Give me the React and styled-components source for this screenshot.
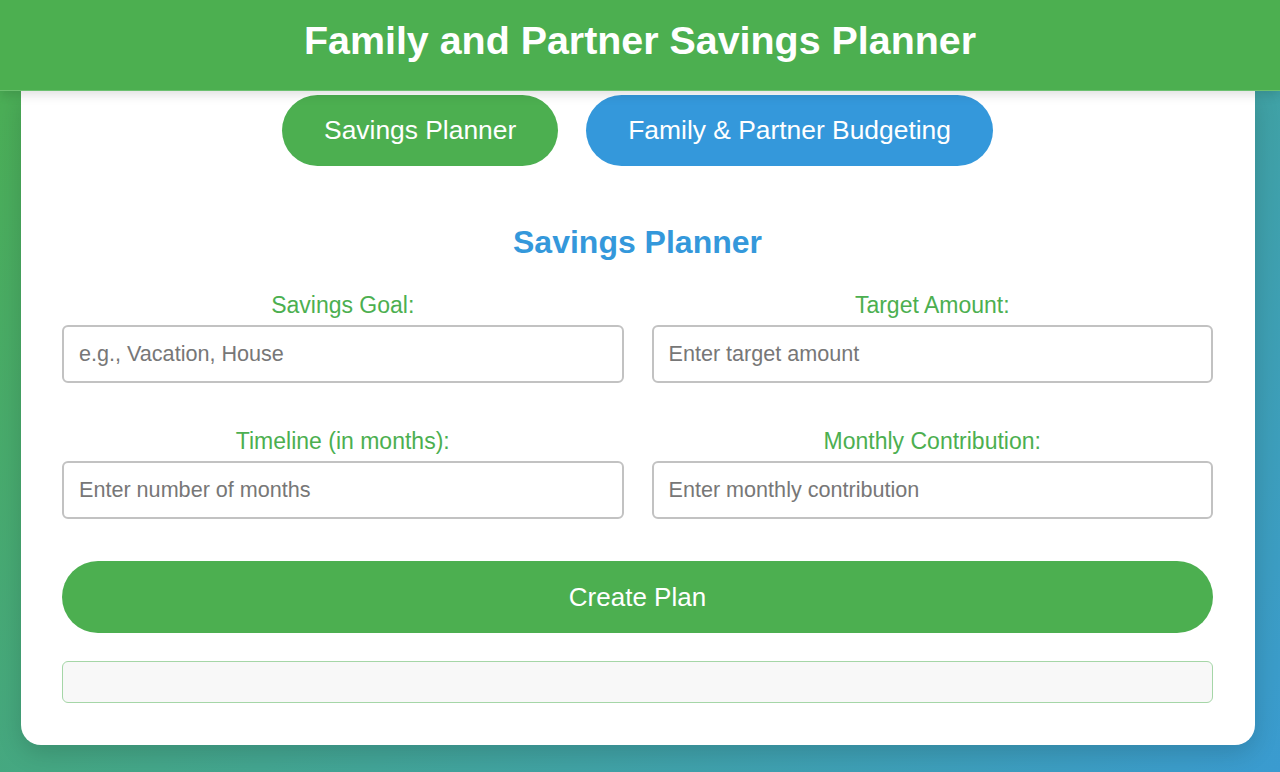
import React from "react";
import styled, { createGlobalStyle } from "styled-components";

const Global = createGlobalStyle`
  html, body { margin: 0; padding: 0; min-height: 100%; }
  body {
    font-family: "Liberation Sans", Arial, sans-serif;
    background: linear-gradient(135deg, #4caf50 0%, #3a9bd0 100%);
    background-attachment: fixed;
    min-height: 100vh;
  }
  * { box-sizing: border-box; }
`;

const Page = styled.div`
  min-height: 772px;
  display: flex;
  flex-direction: column;
`;

const Header = styled.header`
  position: relative;
  z-index: 2;
  height: 91px;
  background: #4caf50;
  display: flex;
  align-items: center;
  justify-content: center;
  box-shadow: 0 4px 10px rgba(0, 0, 0, 0.12);
  border-bottom: 1px solid #6cc070;
`;

const Title = styled.h1`
  margin: 0 0 10px;
  color: #fff;
  font-size: 39.4px;
  font-weight: 700;
`;

const Card = styled.main`
  position: relative;
  z-index: 1;
  margin: 0 0 27px 21px;
  width: 1234px;
  background: #fff;
  border-radius: 0 0 20px 20px;
  box-shadow: 0 8px 24px rgba(0, 0, 0, 0.15);
  padding: 4px 42px 42px 41px;
  display: flex;
  flex-direction: column;
`;

const Tabs = styled.nav`
  display: flex;
  justify-content: center;
  gap: 28px;
`;

const Tab = styled.button`
  border: none;
  border-radius: 999px;
  height: 71px;
  padding: 0 42px;
  font-family: inherit;
  font-size: 26.4px;
  color: #fff;
  background: ${(p) => (p.$variant === "blue" ? "#3498db" : "#4caf50")};
  cursor: pointer;
`;

const Heading = styled.h2`
  margin: 58px 0 0;
  text-align: center;
  color: #3498db;
  font-size: 32px;
  font-weight: 700;
  line-height: 37px;
`;

const FormGrid = styled.div`
  margin-top: 31px;
  display: grid;
  grid-template-columns: 1fr 1fr;
  column-gap: 28px;
  row-gap: 45px;
`;

const Field = styled.div`
  display: flex;
  flex-direction: column;
  gap: 7px;
`;

const Label = styled.label`
  text-align: center;
  color: #4caf50;
  font-size: 23px;
  line-height: 26px;
`;

const Input = styled.input`
  height: 58px;
  border: 2px solid #c2c2c2;
  border-radius: 6px;
  padding: 0 15px;
  font-family: inherit;
  font-size: 21.6px;
  color: #333;
  outline: none;
  &::placeholder { color: #777; }
`;

const CreateButton = styled.button`
  margin-top: 42px;
  height: 72px;
  border: none;
  border-radius: 999px;
  background: #4caf50;
  color: #fff;
  font-family: inherit;
  font-size: 26px;
  cursor: pointer;
`;

const Result = styled.div`
  margin-top: 28px;
  height: 42px;
  border: 1px solid #a5d6a7;
  border-radius: 6px;
  background: #f8f8f8;
`;

const fields = [
  { id: "goal", label: "Savings Goal:", placeholder: "e.g., Vacation, House" },
  { id: "target", label: "Target Amount:", placeholder: "Enter target amount" },
  { id: "timeline", label: "Timeline (in months):", placeholder: "Enter number of months" },
  { id: "monthly", label: "Monthly Contribution:", placeholder: "Enter monthly contribution" },
];

export default function App() {
  return (
    <Page>
      <Global />
      <Header>
        <Title>Family and Partner Savings Planner</Title>
      </Header>
      <Card>
        <Tabs>
          <Tab $variant="green">Savings Planner</Tab>
          <Tab $variant="blue">Family &amp; Partner Budgeting</Tab>
        </Tabs>
        <Heading>Savings Planner</Heading>
        <FormGrid>
          {fields.map((f) => (
            <Field key={f.id}>
              <Label htmlFor={f.id}>{f.label}</Label>
              <Input id={f.id} placeholder={f.placeholder} />
            </Field>
          ))}
        </FormGrid>
        <CreateButton>Create Plan</CreateButton>
        <Result />
      </Card>
    </Page>
  );
}
